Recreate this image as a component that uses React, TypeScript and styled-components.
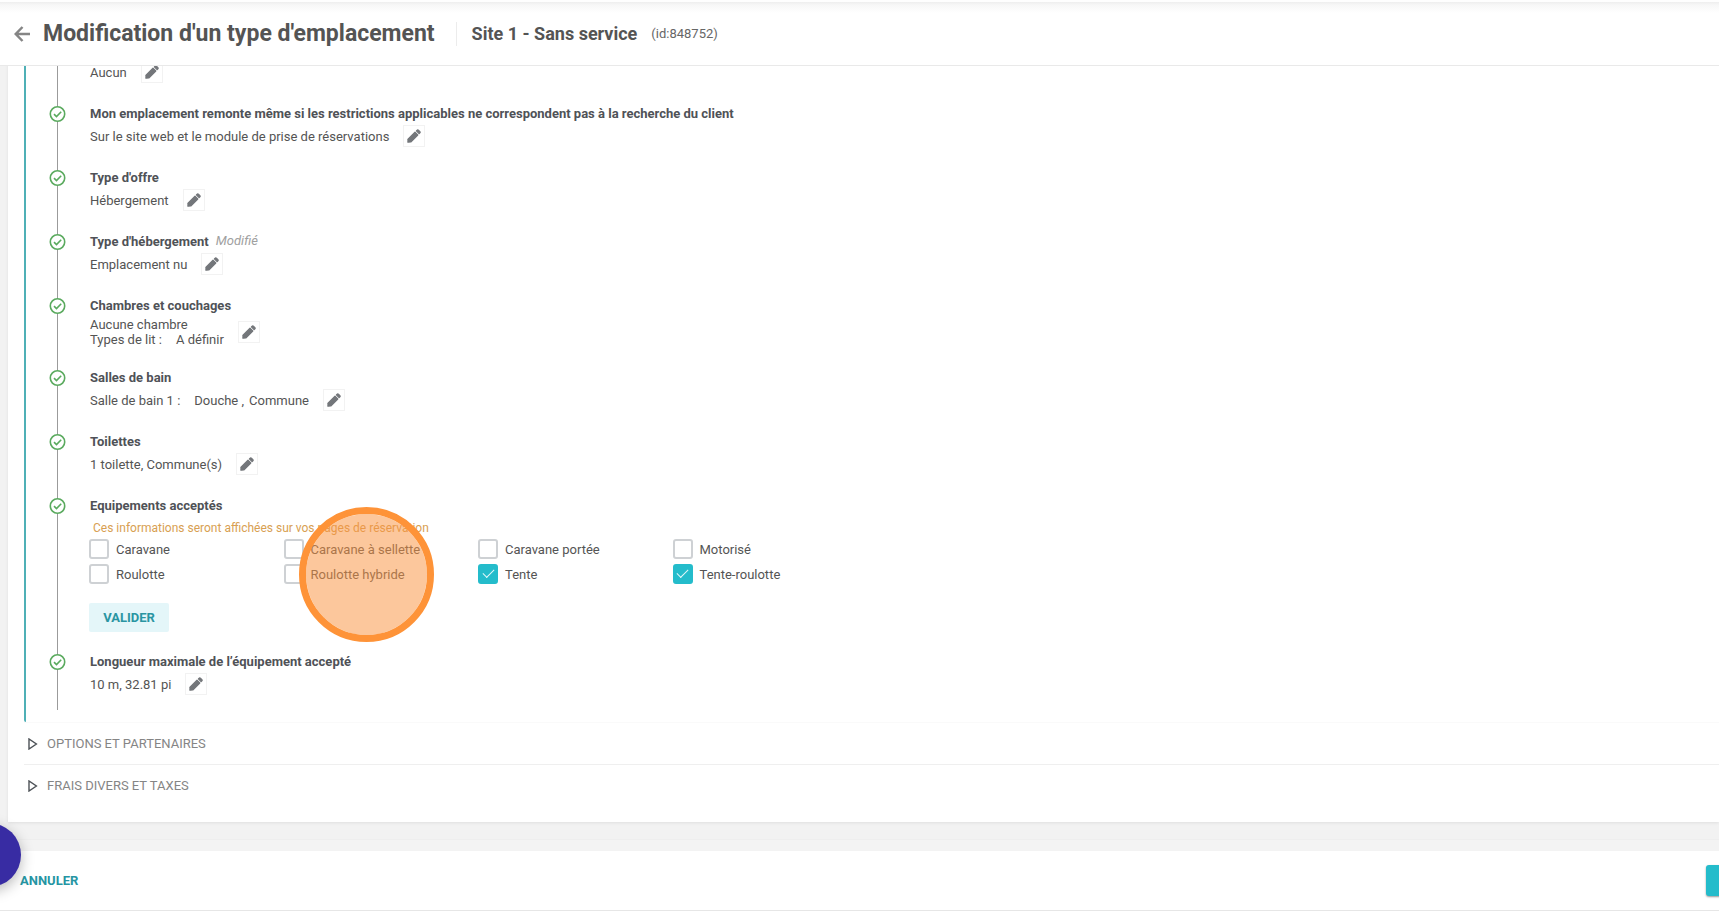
import React from "react";
import styled, { createGlobalStyle } from "styled-components";

const GlobalStyle = createGlobalStyle`
  * { box-sizing: border-box; }
  html, body, #root { height: 100%; }
  body {
    margin: 0;
    background: #f2f2f2;
    color: #545454;
    font-family: Roboto, "Liberation Sans", sans-serif;
    font-size: 13px;
    overflow: hidden;
  }
  button { font-family: inherit; cursor: pointer; }
  h1, h2, h3, p { margin: 0; }
`;

const Page = styled.div`
  display: flex;
  flex-direction: column;
  min-height: 100vh;
  overflow: hidden;
`;

const Header = styled.header`
  position: relative;
  z-index: 1;
  display: flex;
  align-items: center;
  height: 66px;
  padding: 2px 14px 0;
  background: linear-gradient(#fefefe 2px, #eeeeee 2px, #f7f7f7 5px, #ffffff 13px);
  border-bottom: 1px solid #e9e9e9;
`;

const BackButton = styled.button`
  display: flex;
  padding: 0;
  border: 0;
  background: none;
  color: #858585;
`;

const PageTitle = styled.h1`
  margin-left: 12px;
  padding-right: 21px;
  border-right: 1px solid #ececec;
  font-size: 23px;
  line-height: 24px;
  font-weight: 700;
  color: #545454;
`;

const SiteName = styled.h2`
  margin-left: 15px;
  font-size: 18px;
  font-weight: 700;
  color: #545454;
`;

const SiteId = styled.span`
  margin-left: 14px;
  color: #666;
`;

const Card = styled.main`
  margin: -5px 0 0 8px;
  padding: 0 0 16px 16px;
  background: #fff;
  box-shadow: 0 1px 3px rgba(0, 0, 0, 0.08);
`;

const OpenSection = styled.section`
  padding: 0 0 12px 31px;
  border-left: 2px solid #4fb0b6;
  border-bottom-left-radius: 2px;
`;

const StepList = styled.ol`
  margin: 0;
  padding: 0 0 0 31px;
  list-style: none;
  border-left: 1px solid #9b9b9b;
`;

const Step = styled.li`
  padding-bottom: 22px;
  &:last-child { padding-bottom: 15px; }
`;

const StepHead = styled.div`
  display: flex;
  align-items: center;
  height: 18px;
  margin: 0 0 2px -40px;
`;

const StepTitle = styled.h3`
  margin-left: 24px;
  font-size: 13px;
  line-height: 18px;
  font-weight: 700;
  color: #4f5257;
`;

const Tag = styled.em`
  margin-left: 7px;
  line-height: 16px;
  padding-bottom: 2px;
  color: #a0a0a0;
`;

const ValueRow = styled.div`
  display: flex;
  align-items: center;
  gap: 14px;
  padding-left: 1px;
  line-height: 15px;
`;

const Spaced = styled.span<{ $gap: number }>`
  margin-left: ${(p) => p.$gap}px;
`;

const EditButton = styled.button`
  display: flex;
  align-items: center;
  justify-content: center;
  width: 22px;
  height: 22px;
  padding: 0;
  border: 1px solid #f2f2f2;
  background: #fff;
  color: #73767a;
`;

const Note = styled.p`
  padding: 2px 0 2px 4px;
  font-size: 12px;
  line-height: 18px;
  color: #d8a052;
`;

const Options = styled.div`
  display: grid;
  grid-template-columns: repeat(4, 1fr);
  max-width: 778px;
  row-gap: 5px;
  margin: 0 0 19px;
`;

const Option = styled.label`
  display: flex;
  align-items: center;
  gap: 7px;
  height: 20px;
`;

const CheckBox = styled.input`
  display: grid;
  place-items: center;
  appearance: none;
  width: 20px;
  height: 20px;
  margin: 0;
  border: 2px solid #ced1d4;
  border-radius: 3px;
  background: #fff;

  &:checked {
    border-color: #24bccb;
    background: #24bccb;
  }
  &:checked::before {
    content: "";
    width: 10px;
    height: 5px;
    margin-bottom: 4px;
    border: solid #e4f8fa;
    border-width: 0 0 1px 1px;
    transform: rotate(-45deg);
  }
`;

const ValidateButton = styled.button`
  display: block;
  width: 80px;
  height: 29px;
  margin-bottom: -1px;
  padding: 0;
  border: 0;
  border-radius: 2px;
  background: #e4f6f9;
  color: #2a95a2;
  font-size: 13px;
  font-weight: 700;
`;

const Section = styled.button<{ $first?: boolean }>`
  display: flex;
  align-items: center;
  gap: 9px;
  width: 100%;
  height: 42px;
  padding: 0 0 0 4px;
  border: 0;
  border-top: 1px solid ${(p) => (p.$first ? "#fafafa" : "#efefef")};
  background: none;
  color: #858585;
  font-size: 13px;
  text-align: left;
`;

const Footer = styled.footer`
  display: flex;
  align-items: center;
  justify-content: space-between;
  height: 60px;
  margin-top: auto;
  padding-left: 20px;
  background: #fff;
  border-bottom: 1px solid #e6e6e6;
  box-shadow: 0 -11px 0 #f3f3f3, 0 -12px 0 #eeeeee;
`;

const CancelButton = styled.button`
  padding: 0;
  border: 0;
  background: none;
  color: #2695a3;
  font-size: 13px;
  font-weight: 700;
`;

const SaveButton = styled.button`
  width: 120px;
  height: 31px;
  margin-right: -107px;
  border: 0;
  border-radius: 3px;
  background: #24bccb;
  box-shadow: 0 1px 2px rgba(0, 0, 0, 0.4);
`;

const HelpBubble = styled.button`
  position: fixed;
  left: -43px;
  bottom: 24px;
  z-index: 2;
  width: 64px;
  height: 64px;
  padding: 0;
  border: 0;
  border-radius: 50%;
  background: #382ca3;
  box-shadow: 0 4px 14px rgba(0, 0, 0, 0.28);
`;

const ClickMarker = styled.div`
  position: absolute;
  left: 299px;
  top: 507px;
  z-index: 3;
  width: 135px;
  height: 135px;
  border: 7px solid #fe9338;
  border-radius: 50%;
  background: rgba(250, 148, 65, 0.52);
  background-clip: padding-box;
  pointer-events: none;
`;

const ArrowIcon = () => (
  <svg width="17" height="16" viewBox="0 0 17 16" fill="none" stroke="currentColor" strokeWidth="2.5">
    <path d="M16 8H2M8.5 1 1.7 8l6.8 7" />
  </svg>
);

const CheckIcon = () => (
  <svg width="17" height="18" viewBox="0 0 17 18" fill="#fff" stroke="#5aaa5e" strokeWidth="1.6">
    <circle cx="8.5" cy="9" r="7.2" />
    <path d="m5 9.1 2.5 2.5 4.7-4.8" fill="none" />
  </svg>
);

const PencilIcon = () => (
  <svg width="16" height="16" viewBox="0 0 16 16" fill="currentColor" stroke="currentColor" strokeWidth="1.2" strokeLinejoin="round">
    <path d="M2 11.2 9 4.2l2.8 2.8L4.8 14 1.9 14.2z" />
    <path d="m10.4 2.9.8-.8q.6-.6 1.2 0l1.5 1.5q.6.6 0 1.2l-.8.8z" />
  </svg>
);

const TriangleIcon = () => (
  <svg width="10" height="12" viewBox="0 0 10 12" fill="none" stroke="#4d5257" strokeWidth="1.4">
    <path d="M1 1v10l7.4-5z" />
  </svg>
);

const Edit = ({ label }: { label: string }) => (
  <EditButton type="button" aria-label={`Modifier : ${label}`}>
    <PencilIcon />
  </EditButton>
);

type FieldProps = { title: string; tag?: string; children: React.ReactNode };

const Head = ({ title, tag }: { title: string; tag?: string }) => (
  <StepHead>
    <CheckIcon />
    <StepTitle>{title}</StepTitle>
    {tag && <Tag>{tag}</Tag>}
  </StepHead>
);

const Field = ({ title, tag, children }: FieldProps) => (
  <Step>
    <Head title={title} tag={tag} />
    <ValueRow>
      <div>{children}</div>
      <Edit label={title} />
    </ValueRow>
  </Step>
);

const equipment = [
  ["Caravane", false],
  ["Caravane à sellette", false],
  ["Caravane portée", false],
  ["Motorisé", false],
  ["Roulotte", false],
  ["Roulotte hybride", false],
  ["Tente", true],
  ["Tente-roulotte", true],
] as const;

export default function App() {
  return (
    <Page>
      <GlobalStyle />
      <Header>
        <BackButton type="button" aria-label="Retour">
          <ArrowIcon />
        </BackButton>
        <PageTitle>Modification d'un type d'emplacement</PageTitle>
        <SiteName>Site 1 - Sans service</SiteName>
        <SiteId>(id:848752)</SiteId>
      </Header>

      <Card>
        <OpenSection>
          <StepList>
            <Step>
              <ValueRow>
                <div>Aucun</div>
                <Edit label="Aucun" />
              </ValueRow>
            </Step>
            <Field title="Mon emplacement remonte même si les restrictions applicables ne correspondent pas à la recherche du client">
              Sur le site web et le module de prise de réservations
            </Field>
            <Field title="Type d'offre">Hébergement</Field>
            <Field title="Type d'hébergement" tag="Modifié">Emplacement nu</Field>
            <Field title="Chambres et couchages">
              <div>Aucune chambre</div>
              <div>
                Types de lit :<Spaced $gap={14}>A définir</Spaced>
              </div>
            </Field>
            <Field title="Salles de bain">
              Salle de bain 1 :<Spaced $gap={14}>Douche ,</Spaced>
              <Spaced $gap={5}>Commune</Spaced>
            </Field>
            <Field title="Toilettes">1 toilette, Commune(s)</Field>
            <Step>
              <Head title="Equipements acceptés" />
              <Note>Ces informations seront affichées sur vos pages de réservation</Note>
              <Options>
                {equipment.map(([name, checked]) => (
                  <Option key={name}>
                    <CheckBox type="checkbox" defaultChecked={checked} />
                    {name}
                  </Option>
                ))}
              </Options>
              <ValidateButton type="button">VALIDER</ValidateButton>
            </Step>
            <Field title="Longueur maximale de l’équipement accepté">10 m, 32.81 pi</Field>
          </StepList>
        </OpenSection>
        <Section type="button" aria-expanded={false} $first>
          <TriangleIcon />
          OPTIONS ET PARTENAIRES
        </Section>
        <Section type="button" aria-expanded={false}>
          <TriangleIcon />
          FRAIS DIVERS ET TAXES
        </Section>
      </Card>

      <Footer>
        <CancelButton type="button">ANNULER</CancelButton>
        <SaveButton type="button" aria-label="Enregistrer" />
      </Footer>

      <HelpBubble type="button" aria-label="Aide" />
      <ClickMarker />
    </Page>
  );
}
